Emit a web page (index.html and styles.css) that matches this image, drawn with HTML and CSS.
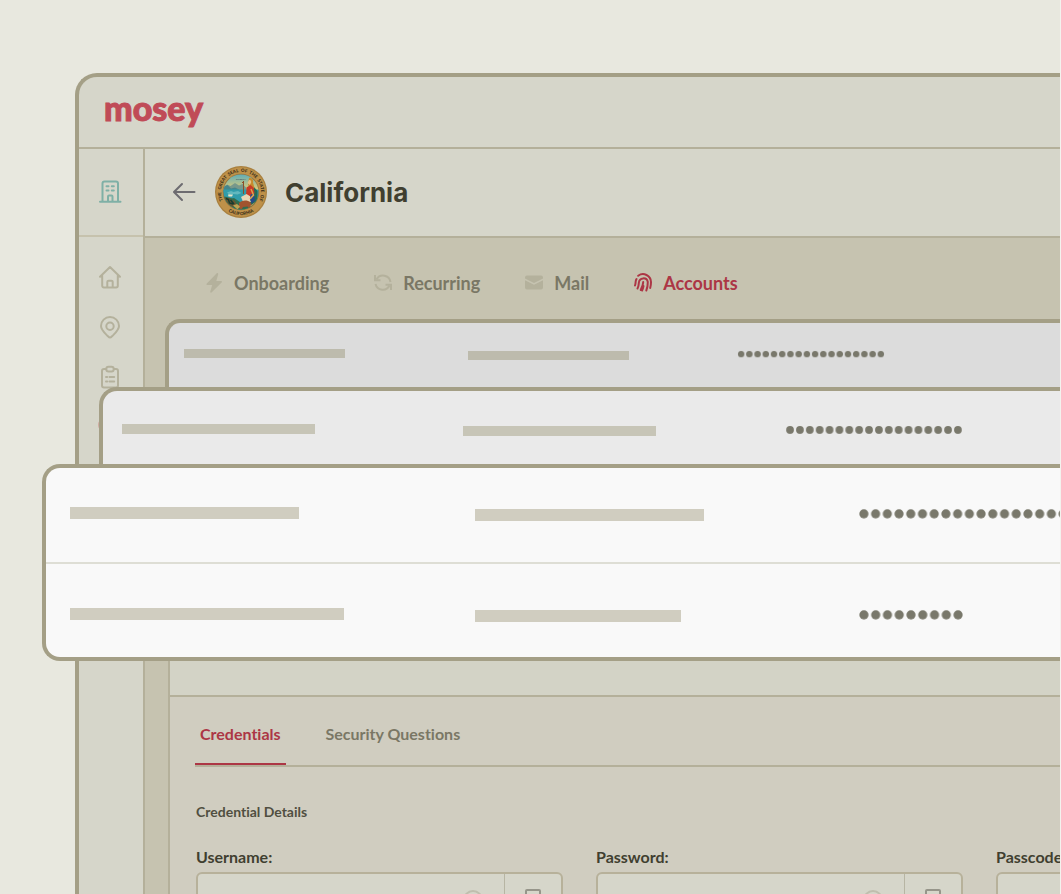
FILE: index.html
```html
<!DOCTYPE html>
<html lang="en">
<head>
<meta charset="utf-8">
<title>Mosey – California accounts</title>
<link rel="stylesheet" href="styles.css">
</head>
<body>
<div class="stage">
  <div class="window">
    <header class="topbar"><a class="logo" href="#">mosey</a></header>
    <div class="columns">
      <nav class="sidebar" aria-label="Main">
        <a class="side-link side-link-company" href="#" aria-label="Company">
          <svg viewBox="0 0 24 24"><path d="M4.500 22.500V4.500a2 2 0 0 1 2-2h11.500a2 2 0 0 1 2 2v18M2 22.700h20.500M10 22v-4.500a1 1 0 0 1 1-1h2.500a1 1 0 0 1 1 1V22"/><path d="M8.500 7.300h2M13.800 7.300h2M8.500 11.500h2M13.800 11.500h2"/></svg>
        </a>
        <div class="side-group">
          <a class="side-link" href="#" aria-label="Home"><svg viewBox="0 0 24 24"><path d="M2 11.800 12 2l10 9.800M4.200 10v10.800a1.700 1.700 0 0 0 1.700 1.700h12.200a1.700 1.700 0 0 0 1.700-1.700V10M9.300 22v-5a1.300 1.300 0 0 1 1.300-1.300h2.800a1.300 1.300 0 0 1 1.300 1.300v5"/></svg></a>
          <a class="side-link" href="#" aria-label="Locations"><svg viewBox="0 0 24 24"><path d="M12 22.500c-1 0-1.600-.8-2.300-1.500C6 17.300 3 14.800 3 11a9 9 0 0 1 18 0c0 3.800-3 6.300-6.700 10-.7.700-1.300 1.500-2.300 1.500z"/><circle cx="12" cy="11.200" r="3.700"/></svg></a>
          <a class="side-link" href="#" aria-label="Tasks"><svg viewBox="0 0 24 24"><path d="M8 4H6a2 2 0 0 0-2 2v14.500a2 2 0 0 0 2 2h12a2 2 0 0 0 2-2V6a2 2 0 0 0-2-2h-2"/><rect x="8.300" y="1.700" width="7.400" height="4.800" rx="2.200"/><path d="M8 12h1.200M11.500 12h4.700M8 16.500h1.200M11.500 16.500h4.700"/></svg></a>
          <a class="side-link side-link-alert" href="#" aria-label="Alerts"><svg viewBox="0 0 24 24"><circle cx="12" cy="10" r="10.600"/></svg></a>
        </div>
      </nav>
      <main class="main">
        <div class="title-row">
          <button class="back" type="button" aria-label="Back"><svg viewBox="0 0 24 20"><path d="M22.500 10H2.500M10 2 2 10l8 8"/></svg></button>
          <svg class="seal" viewBox="0 0 104 104" role="img" aria-label="Great Seal of the State of California">
            <defs>
              <linearGradient id="sky" x1="0" y1="0" x2="0" y2="1"><stop offset="0" stop-color="#5eacb8"/><stop offset="1" stop-color="#e3cc75"/></linearGradient>
              <clipPath id="disc"><circle cx="52" cy="52" r="35"/></clipPath>
              <path id="arcTop" d="M24 80.500A40 40 0 1 1 80 80.500"/>
              <path id="arcBottom" d="M12 76A47 47 0 0 0 92 76"/>
            </defs>
            <circle cx="52" cy="52" r="52" fill="#a9803f"/>
            <circle cx="52" cy="52" r="49.500" fill="#be9149"/>
            <circle cx="52" cy="52" r="36.500" fill="#96733b"/>
            <g clip-path="url(#disc)">
              <rect x="16" y="16" width="72" height="32" fill="url(#sky)"/>
              <path d="M16 46l8-9 7 3 9-6 8 5 7-3 8 8v8H16z" fill="#77988b"/>
              <path d="M16 41l9-3 7 7 8-2 8 4v5H16z" fill="#45858b"/>
              <rect x="16" y="47" width="72" height="43" fill="#319daa"/>
              <path d="M24 53l8-3 5 2 9-2 7 4-8 3-9-1-7 2z" fill="#61b8be"/>
              <path d="M26 57h10l-2 4h-7zM34 52v6" fill="#e9e6ca"/>
              <path d="M16 61c9 0 14 5 22 3l12 8h38v18H16z" fill="#326d4d"/>
              <path d="M18 62l7 3 4-2 4 7 5-2 5 8-8 6-9-7z" fill="#6a552f"/>
              <path d="M22 65l5 2 2 7 7 2M31 68l7 8" stroke="#183c31" stroke-width="3" fill="none"/>
              <path d="M67 43l10-2 8 9v26l-16 8-12-8z" fill="#266a55"/>
              <path d="M68 24c5-2 10 4 8 9l3 11-9 4-4-11z" fill="#c68b2e"/>
              <path d="M68 28c4-1 5 3 4 6l-3 4-4-4z" fill="#e6bf83"/>
              <path d="M63 43l8-5 6 5 2 11-5 11-12-5z" fill="#c83b27"/>
              <path d="M52 62l11-6 8 5 2 10-15 5z" fill="#e5d6b6"/>
              <path d="M71 57l7-2 2 14-6 6-4-7z" fill="#244a8b"/>
              <path d="M72 46l5 12-7 8" stroke="#e0a24e" stroke-width="3" fill="none"/>
              <path d="M57 31v25M54 34l4-4" stroke="#8a4f2b" stroke-width="2" fill="none"/>
              <path d="M48 74c5-6 17-7 23-1 5 6 1 13-3 13l-3-5-9 1-3 5-5-3z" fill="#a1542f"/>
              <path d="M36 79l8-3 6 5-5 6zM70 80l9-7 5 2-9 10z" fill="#bea252"/>
            </g>
            <text class="seal-tiny" x="52" y="28" text-anchor="middle">EUREKA</text>
            <text class="seal-text"><textPath href="#arcTop" startOffset="50%" text-anchor="middle">THE&#160; GREAT&#160; SEAL&#160; OF&#160; THE&#160; STATE&#160; OF</textPath></text>
            <text class="seal-text"><textPath href="#arcBottom" startOffset="50%" text-anchor="middle">CALIFORNIA</textPath></text>
          </svg>
          <h1 class="title">California</h1>
        </div>
        <nav class="tabs" aria-label="State">
          <a class="tab" href="#"><svg viewBox="0 0 18 20"><path fill="currentColor" d="M11.500.5 1.800 10.400c-.8.800-.3 1.700.7 1.700h4.700L5.300 18.500c-.3 1.200.8 1.600 1.500.8l9.800-9.700c.8-.8.300-1.700-.7-1.700h-4.600L13.200 1.300c.3-1.200-.9-1.600-1.700-.8z"/></svg><span>Onboarding</span></a>
          <a class="tab" href="#"><svg viewBox="0 0 18 20"><g fill="none" stroke="currentColor" stroke-width="2"><path d="M2.500 6.500A7.500 7.500 0 0 1 16.500 9M15.500 12.500A7.500 7.500 0 0 1 1.500 11"/><path d="M1 2v5.300H6.500M17 17v-5.300H11.500"/></g></svg><span>Recurring</span></a>
          <a class="tab" href="#"><svg viewBox="0 0 18 20"><path fill="currentColor" d="M0 5.500V4.500a2 2 0 0 1 2-2h14a2 2 0 0 1 2 2v1L9 10zM0 7.300l9 4.500 9-4.500V14.500a2 2 0 0 1-2 2H2a2 2 0 0 1-2-2z"/></svg><span>Mail</span></a>
          <a class="tab tab-active" href="#"><svg viewBox="0 0 18 20"><g fill="none" stroke="currentColor" stroke-width="2" stroke-linecap="round"><path d="M4.200 2.800A8 8 0 0 1 17 9c0 2.500-.3 4.300-.8 6"/><path d="M1 12.500c.5-1.300.6-2.600.7-4 .1-1 .3-1.700.8-2.500"/><path d="M3.500 15.500c1-2 1.300-4 1.400-6A4.500 4.500 0 0 1 13.800 9c0 3.500-.4 6-1.500 8.500"/><path d="M6.700 17c1.300-2.500 2.500-5 2.500-8M9.500 13c-.3 1.500-.7 3-1.400 4.500"/></g></svg><span>Accounts</span></a>
        </nav>
        <section class="panel">
          <div class="panel-list"></div>
          <div class="panel-detail">
            <nav class="subtabs" aria-label="Account details">
              <a class="subtab subtab-active" href="#">Credentials</a>
              <a class="subtab" href="#">Security Questions</a>
            </nav>
            <h2 class="detail-title">Credential Details</h2>
            <form class="fields">
              <div class="field">
                <label for="username">Username:</label>
                <div class="control"><input id="username" type="text"><button class="reveal" type="button" aria-label="Show username"><svg viewBox="0 0 20 20"><circle cx="10" cy="10" r="9"/></svg></button><button class="copy" type="button" aria-label="Copy username"><svg viewBox="0 0 20 20"><rect x="3" y="1" width="14" height="18" rx="1"/></svg></button></div>
              </div>
              <div class="field">
                <label for="password">Password:</label>
                <div class="control"><input id="password" type="password"><button class="reveal" type="button" aria-label="Show password"><svg viewBox="0 0 20 20"><circle cx="10" cy="10" r="9"/></svg></button><button class="copy" type="button" aria-label="Copy password"><svg viewBox="0 0 20 20"><rect x="3" y="1" width="14" height="18" rx="1"/></svg></button></div>
              </div>
              <div class="field">
                <label for="passcode">Passcode:</label>
                <div class="control"><input id="passcode" type="password"></div>
              </div>
            </form>
          </div>
        </section>
      </main>
    </div>
  </div>

  <div class="stack">
    <svg class="defs" width="0" height="0"><defs><pattern id="dots" width="12" height="12" patternUnits="userSpaceOnUse"><circle cx="6" cy="6" r="4.700" fill="#79786b"/></pattern></defs></svg>
    <div class="card card-back">
      <div class="row"><i class="bar"></i><i class="bar bar-second"></i><svg class="dots" viewBox="0 0 216 12"><rect width="216" height="12" fill="url(#dots)"/></svg></div>
    </div>
    <div class="card card-middle">
      <div class="row"><i class="bar"></i><i class="bar bar-second"></i><svg class="dots" viewBox="0 0 216 12"><rect width="216" height="12" fill="url(#dots)"/></svg></div>
    </div>
    <div class="card card-front">
      <div class="row"><i class="bar"></i><i class="bar bar-second"></i><svg class="dots" viewBox="0 0 216 12"><rect width="216" height="12" fill="url(#dots)"/></svg></div>
      <div class="row row-last"><i class="bar bar-long"></i><i class="bar bar-second bar-short"></i><svg class="dots dots-half" viewBox="0 0 108 12"><rect width="108" height="12" fill="url(#dots)"/></svg></div>
    </div>
  </div>
</div>
</body>
</html>
```
FILE: styles.css
```css
* { box-sizing: border-box; }
body { margin: 0; background: #f3f3ee; font-family: Lato, "Liberation Sans", sans-serif; font-variant-ligatures: none; color: #403f30; }
a { color: inherit; text-decoration: none; }
button { border: 0; padding: 0; background: none; color: inherit; }
svg { display: block; flex: none; }

.stage { position: relative; height: 100vh; margin-right: 1px; padding: 73px 0 0 75px; overflow: hidden; background: #e8e8df; display: flex; }
.window { flex: 1; min-width: 0; display: flex; flex-direction: column; border: solid #a49f86; border-width: 4px 0 0 4px; border-top-left-radius: 22px; background: #d6d6ca; overflow: hidden; }
.topbar { flex: none; height: 72px; padding-left: 25px; border-bottom: 2px solid #b4b09a; display: flex; align-items: center; }
.logo { color: #c04b57; font-size: 34px; line-height: 40px; font-weight: 900; padding-bottom: 9px; -webkit-text-stroke: 1px #c04b57; }
.columns { flex: 1; min-height: 0; display: flex; }

.sidebar { flex: none; width: 66px; padding-right: 3px; border-right: 2px solid #b4b09a; display: flex; flex-direction: column; color: #b4b19c; }
.side-link { display: flex; justify-content: center; align-items: center; }
.side-link svg { width: 24px; height: 24px; fill: none; stroke: currentColor; stroke-width: 2; stroke-linecap: round; stroke-linejoin: round; }
.side-link-company { height: 88px; margin-right: -3px; padding: 0 3px 2px 0; border-bottom: 2px solid #c6c2ad; color: #7fb0a6; }
.side-group { padding-top: 28px; display: flex; flex-direction: column; gap: 26px; }
.side-link-alert { color: #cc8f86; }

.main { flex: 1; min-width: 0; display: flex; flex-direction: column; background: #c6c3b0; }
.title-row { flex: none; height: 89px; padding: 0 0 2px 27px; border-bottom: 2px solid #b4b09a; background: #d6d6ca; display: flex; align-items: center; }
.back svg { width: 24px; height: 20px; fill: none; stroke: #6d6c70; stroke-width: 2; stroke-linecap: round; stroke-linejoin: round; }
.seal { width: 52px; height: 52px; margin: 0 18px 0 19px; }
.seal-text { font: 900 9px Lato, sans-serif; fill: #392e19; }
.seal-tiny { font: 700 5px Lato, sans-serif; fill: #455b66; }
.title { margin: 0; padding-top: 2px; font: 700 26px/32px Inter, sans-serif; }

.tabs { flex: none; height: 90px; padding-left: 60px; display: flex; align-items: center; gap: 45px; }
.tab { display: flex; align-items: center; gap: 11px; color: #b4b19c; font-size: 18px; line-height: 24px; font-weight: 700; }
.tab svg { width: 18px; height: 20px; }
.tab span { color: #7a7765; }
.tab-active, .tab-active span { color: #ac3645; }

.panel { flex: 1; margin-left: 23px; border-left: 2px solid #b4b09a; display: flex; flex-direction: column; }
.panel-list { flex: none; height: 369px; border-bottom: 2px solid #b4b09a; background: #d3d3c6; }
.panel-detail { flex: 1; padding-left: 25px; background: #d0cdc0; }
.subtabs { height: 70px; border-bottom: 2px solid #b4b09a; display: flex; gap: 35px; }
.subtab { height: 68px; padding: 5px 5px 0; display: flex; align-items: center; color: #7a7765; font-size: 16px; line-height: 20px; font-weight: 700; }
.subtab-active { padding-top: 7px; color: #ac3645; border-bottom: 2px solid #ac3645; }
.detail-title { margin: 37px 0 0 1px; font-size: 14px; line-height: 16px; font-weight: 700; color: #504f41; }
.fields { margin: 27px 0 0 1px; display: grid; grid-template-columns: repeat(3, 367px); gap: 33px; }
.field label { display: block; font-size: 16px; line-height: 20px; font-weight: 700; }
.control { height: 50px; margin-top: 5px; border: 2px solid #b7b19a; border-radius: 6px; background: #d6d6ca; display: flex; }
.control input { flex: 1; min-width: 0; border: 0; padding: 0 12px; background: none; font: inherit; color: inherit; outline: 0; }
.control svg { width: 20px; height: 20px; fill: none; stroke: currentColor; stroke-width: 2; }
.reveal { width: 62px; padding-top: 6px; display: flex; align-items: center; justify-content: center; color: #bfbeae; }
.copy { width: 57px; padding-top: 3px; border-left: 1px solid #b7b5a3; display: flex; align-items: center; justify-content: center; color: #96958a; }

.stack { position: absolute; left: 42px; right: 0; top: 319px; }
.defs { position: absolute; }
.card { border: solid #a49f86; border-width: 4px 0 0 4px; overflow: hidden; }
.row { display: grid; align-items: center; }
.bar { display: block; margin-bottom: 2px; background: #d0cdc0; }
.bar-second { margin: 2px 0 0; }
.card-back { margin-left: 123px; border-top-left-radius: 15px; background: #dcdcdc; }
.card-back .row { height: 64px; padding: 0 0 1px 15px; grid-template-columns: 284px 269px 1fr; }
.card-back .bar { width: 161px; height: 9px; background: #bdbbad; }
.card-back .dots { width: 148px; }
.card-middle { margin-left: 57px; border-top-left-radius: 18px; background: #eaeaea; }
.card-middle .row { height: 73px; padding: 5px 0 0 19px; grid-template-columns: 341px 322px 1fr; }
.card-middle .bar { width: 193px; height: 10px; background: #c7c5b7; }
.card-middle .dots { width: 178px; }
.card-front { border-bottom-width: 4px; border-radius: 18px 0 0 18px; background: #f9f9f9; }
.card-front .row { height: 94px; padding: 0 0 2px 24px; grid-template-columns: 405px 383px 1fr; }
.card-front .row-last { height: 95px; padding: 8px 0 0 24px; border-top: 2px solid #deded5; }
.card-front .bar { width: 229px; height: 12px; }
.card-front .bar-long { width: 274px; }
.card-front .bar-short { width: 206px; }
.card-front .dots { width: 211px; }
.card-front .dots-half { width: 106px; }
```
